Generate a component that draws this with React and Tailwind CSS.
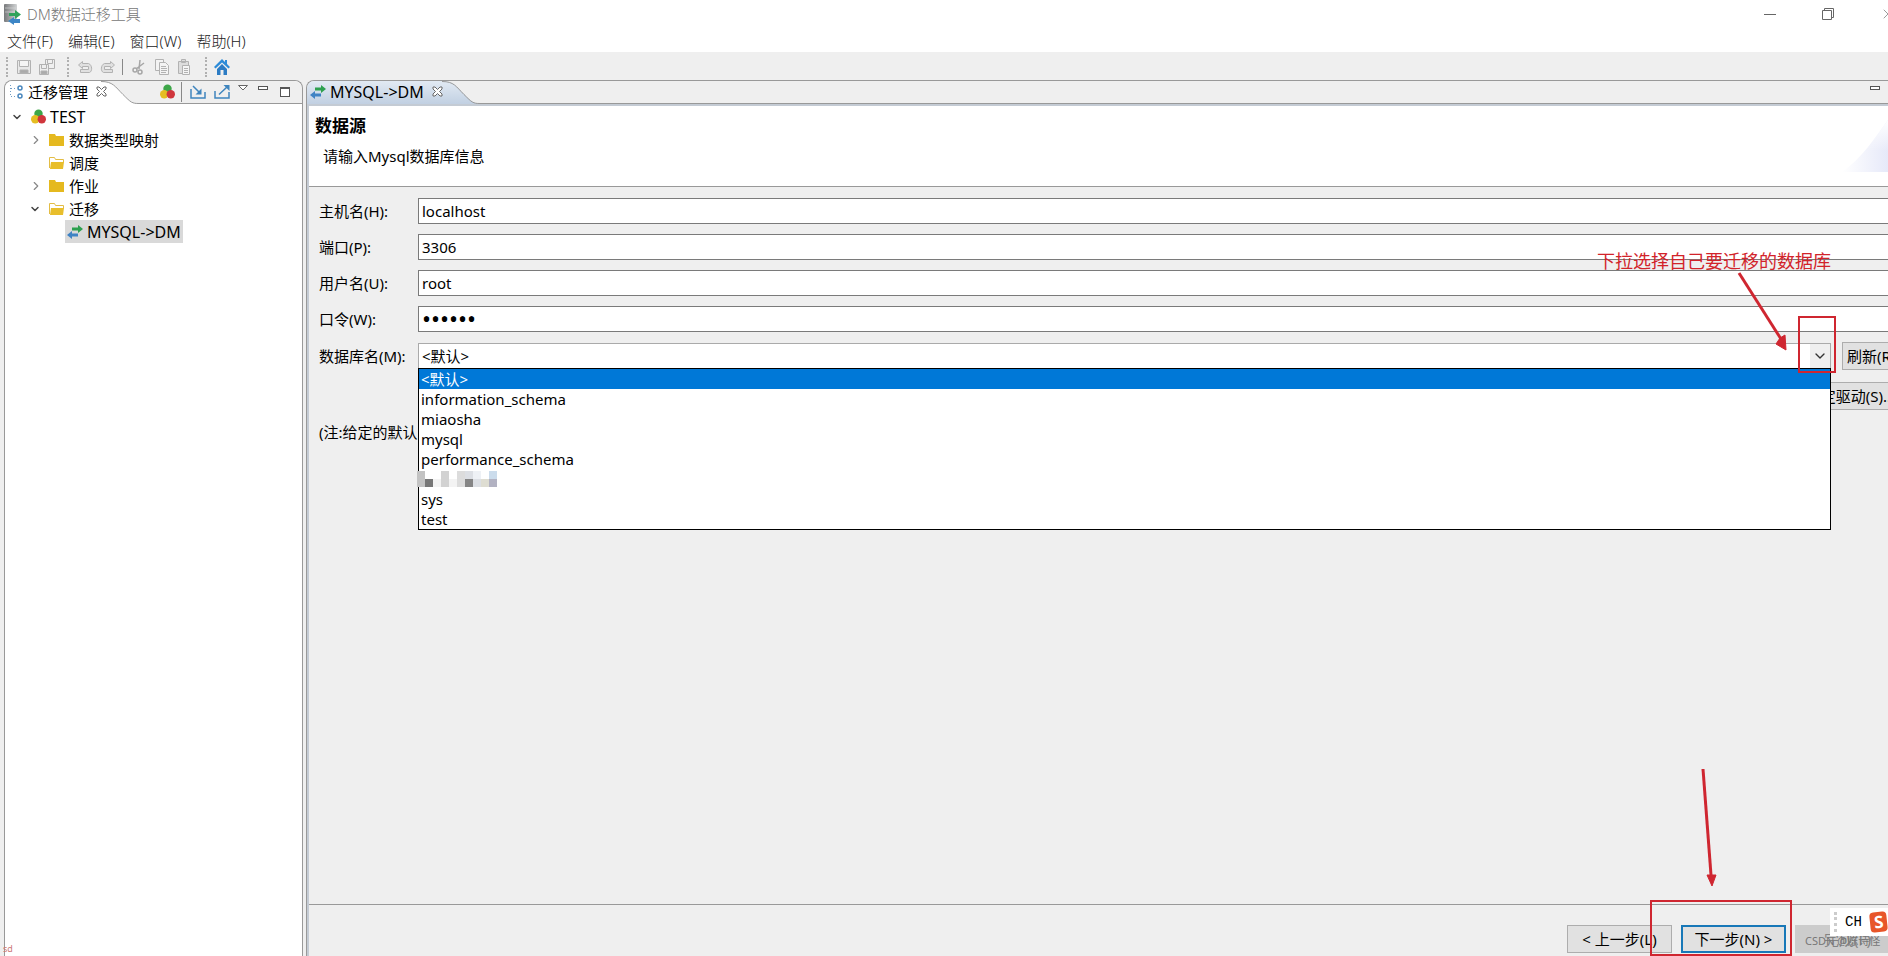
import { useState } from 'react';
import { X, ChevronDown, ChevronRight } from 'lucide-react';

const databases = [
  '<默认>',
  'information_schema',
  'miaosha',
  'mysql',
  'performance_schema',
  null,
  'sys',
  'test',
];

const fields = [
  { id: 'host', label: '主机名(H):', type: 'text', value: 'localhost' },
  { id: 'port', label: '端口(P):', type: 'text', value: '3306' },
  { id: 'user', label: '用户名(U):', type: 'text', value: 'root' },
];

const menus = ['文件(F)', '编辑(E)', '窗口(W)', '帮助(H)'];

const AppIcon = () => (
  <svg width="18" height="22" viewBox="0 0 18 22" className="shrink-0">
    <defs>
      <linearGradient id="server">
        <stop offset="0" stopColor="#77797b" />
        <stop offset="1" stopColor="#d2d4d5" />
      </linearGradient>
    </defs>
    <rect x="0" y="1" width="13" height="18" rx="1" fill="url(#server)" />
    <path d="M1 5h11M1 9h11" stroke="#dcdddd" strokeOpacity=".6" />
    <path d="M5 10h6V7l6 4.500-6 4.500v-3H5z" fill="#2fa35b" />
    <path d="M16 16h-6v-2l-6 4 6 4v-2h6z" fill="#3d86c6" />
  </svg>
);

const Arrows = () => (
  <svg width="16" height="14" viewBox="0 0 16 14" className="shrink-0">
    <path d="M5 2.500h6V0l5 4-5 4V5.500H5z" fill="#2da04f" />
    <path d="M11 8.500H5V6L0 10l5 4v-2.500h6z" fill="#3f83c4" />
  </svg>
);

const Balls = () => (
  <svg width="15" height="15" viewBox="0 0 16 16" className="shrink-0">
    <circle cx="8" cy="5" r="4.500" fill="#3da648" />
    <circle cx="4.500" cy="11" r="4.500" fill="#e5bd22" />
    <circle cx="11.500" cy="11" r="4.500" fill="#d0363c" />
  </svg>
);

const Folder = ({ open }) => (
  <svg width="16" height="14" viewBox="0 0 16 14" className="shrink-0">
    {open ? (
      <>
        <path d="M.5 12V1.500h5l1 2h8v3" fill="#fff" stroke="#e3bd45" />
        <path d="M2 6h13l-1 7H1z" fill="#e8be2c" />
      </>
    ) : (
      <path d="M0 1h6l1 2h8v10H0z" fill="#e5b91f" />
    )}
  </svg>
);

// bow-tie shaped close mark of an Eclipse tab
const TabClose = () => (
  <svg width="11" height="11" viewBox="0 0 11 11">
    <path
      d="M1 1h2l2.500 2.500L8 1h2v2L7.500 5.500 10 8v2H8L5.500 7.500 3 10H1V8l2.500-2.500L1 3z"
      fill="#fff"
      stroke="#666"
    />
  </svg>
);

const Grip = () => <span className="h-5 border-l-2 border-dotted border-[#b0b0b0]" />;

function Toolbar() {
  return (
    <div className="flex h-7 items-center bg-[#efefef] pl-1.5 pt-0.5">
      <Grip />
      <button aria-label="保存" className="ml-2">
        <svg width="16" height="16" viewBox="0 0 16 16" fill="none" stroke="#b2b2b2">
          <path d="M1.500 1.500h13v13h-13z" fill="#e8e8e8" />
          <path d="M3.500 1.500h9v6h-9z" fill="#f5f5f5" />
          <path d="M4 11h8v3H4z" fill="#aaa" />
        </svg>
      </button>
      <button aria-label="全部保存" className="ml-[7px]">
        <svg width="16" height="16" viewBox="0 0 16 16" fill="none" stroke="#b2b2b2">
          <path d="M6.500.5h9v9h-9zM8.500.5h5v4h-5z" fill="#f0f0f0" />
          <path d="M.5 5.500h9v10h-9z" fill="#eee" />
          <path d="M2.500 5.500h5v4h-5z" />
          <path d="M2 12h6v3H2z" fill="#aaa" />
        </svg>
      </button>
      <span className="ml-3 flex">
        <Grip />
      </span>
      <button aria-label="撤销" className="ml-2">
        <svg width="16" height="16" viewBox="0 0 16 16" fill="none" stroke="#b2b2b2">
          <path d="M5.500 2.500 1.500 6l4 3.500v-2h6v3h-8v3h9c3-1 3-7.500-1-9h-6z" fill="#e0e0e0" />
        </svg>
      </button>
      <button aria-label="重做" className="ml-[7px]">
        <svg width="16" height="16" viewBox="0 0 16 16" fill="none" stroke="#b2b2b2">
          <path d="m10.500 2.500 4 3.500-4 3.500v-2h-6v3h8v3h-9c-3-1-3-7.500 1-9h6z" fill="#e0e0e0" />
        </svg>
      </button>
      <span className="ml-1.5 h-4 w-px bg-[#888]" />
      <button aria-label="剪切" className="ml-2">
        <svg width="16" height="16" viewBox="0 0 16 16" fill="none" stroke="#a6a6a6" strokeWidth="1.500">
          <path d="m9 1-1 9M13 4 5 10" />
          <circle cx="4" cy="11" r="2" />
          <circle cx="9" cy="13" r="2" />
        </svg>
      </button>
      <button aria-label="复制" className="ml-[7px]">
        <svg width="16" height="16" viewBox="0 0 16 16" fill="#f3f3f3" stroke="#b2b2b2">
          <path d="M1.500.5h8v11h-8z" />
          <path d="M5.500 3.500h6l3 3v9h-9z" />
          <path d="M7 7.500h5M7 9.500h6M7 11.500h6M7 13.500h5" />
        </svg>
      </button>
      <button aria-label="粘贴" className="ml-[7px]">
        <svg width="16" height="16" viewBox="0 0 16 16" fill="#ddd" stroke="#b2b2b2">
          <path d="M1.500 2.500h10v12h-10zM4.500.5h4v3h-4z" />
          <path d="M5.500 6.500h7v9h-7z" fill="#f5f5f5" />
          <path d="M7 9.500h4M7 11.500h4M7 13.500h4" />
        </svg>
      </button>
      <span className="ml-3 flex">
        <Grip />
      </span>
      <button aria-label="主页" className="ml-[7px]">
        <svg width="16" height="16" viewBox="0 0 16 16">
          <path d="M8 0 0 8l1.500 1.500L8 3.500l6.500 6L16 8l-3-3V1h-2v2z" fill="#2c8bd8" />
          <path d="m8 5-5 5v6h3.500v-5h3v5H13v-6z" fill="#2c7cc4" />
        </svg>
      </button>
    </div>
  );
}

function TreeRow({ indent, state, icon, children, selected }) {
  return (
    <li className={`flex h-[23px] items-center ${indent}`}>
      <span className="flex w-5 shrink-0 items-center">
        {state === 'open' && <ChevronDown size={12} strokeWidth={3} className="text-[#444]" />}
        {state === 'closed' && <ChevronRight size={14} strokeWidth={2} className="text-[#888]" />}
      </span>
      <span className={`flex h-[23px] items-center gap-1 pr-0.5 ${selected ? 'bg-[#d9d9d9]' : ''}`}>
        {icon}
        {children}
      </span>
    </li>
  );
}

function Sidebar() {
  return (
    <aside className="ml-1 flex w-[299px] shrink-0 flex-col rounded-t-lg border border-b-0 border-[#999] bg-white">
      <div className="relative flex h-[23px] items-center overflow-hidden rounded-t-lg bg-[#efefef] pb-0.5 shadow-[inset_0_-1px_0_#999]">
        <svg width="134" height="23" viewBox="0 0 134 23" className="absolute left-0 top-0">
          <path d="M0 0h96c12 0 14 5 22 13s9 9 16 9.500V23H0z" fill="#fff" />
          <path d="M96 .5c12 0 14 5 22 13s9 9 16 9" fill="none" stroke="#999" />
        </svg>
        <h2 className="relative flex items-center pl-[3px]">
          <svg width="16" height="16" viewBox="0 0 16 16" fill="none">
            <path d="M2.500 1v12M3 4.500h6M3 12.500h6" stroke="#6f9cc4" strokeDasharray="1 2" />
            <circle cx="12" cy="4" r="2" stroke="#4a87bd" strokeWidth="1.500" />
            <circle cx="12" cy="12" r="2" stroke="#4a87bd" strokeWidth="1.500" />
          </svg>
          <span className="ml-1">迁移管理</span>
        </h2>
        <button aria-label="关闭视图" className="relative ml-2">
          <TabClose />
        </button>
        <div className="ml-auto flex items-center pr-3">
          <button aria-label="分组">
            <Balls />
          </button>
          <span className="ml-1.5 h-5 w-px bg-[#888]" />
          <button aria-label="导入" className="ml-2">
            <svg width="16" height="14" viewBox="0 0 16 14" fill="none" stroke="#3f85be" strokeWidth="1.500">
              <path d="M1 4v9h14V7M3 1l7 7" />
              <path d="M11.500 3.500V9.500H5.500z" fill="#3f85be" stroke="none" />
            </svg>
          </button>
          <button aria-label="导出" className="ml-2">
            <svg width="16" height="14" viewBox="0 0 16 14" fill="none" stroke="#3f85be" strokeWidth="1.500">
              <path d="M1 6v7h14V7M5 9.500 13 2" />
              <path d="M9.500 0H15.500V6z" fill="#3f85be" stroke="none" />
            </svg>
          </button>
          <button aria-label="视图菜单" className="mb-2 ml-2">
            <svg width="10" height="6" viewBox="0 0 10 6">
              <path d="M.5.5h9L5 5z" fill="#fff" stroke="#666" />
            </svg>
          </button>
          <button aria-label="最小化视图" className="mb-2 ml-2.5 h-1 w-2.5 border border-[#555] bg-white" />
          <button aria-label="最大化视图" className="ml-3 h-2.5 w-2.5 border border-t-2 border-[#555] bg-white" />
        </div>
      </div>
      <ul className="flex-1 pt-px">
        <TreeRow indent="pl-1.5" state="open" icon={<Balls />}>
          <span className="text-base leading-5">TEST</span>
        </TreeRow>
        <TreeRow indent="pl-6" state="closed" icon={<Folder />}>数据类型映射</TreeRow>
        <TreeRow indent="pl-6" icon={<Folder open />}>调度</TreeRow>
        <TreeRow indent="pl-6" state="closed" icon={<Folder />}>作业</TreeRow>
        <TreeRow indent="pl-6" state="open" icon={<Folder open />}>迁移</TreeRow>
        <TreeRow indent="pl-10" icon={<span className="pl-0.5"><Arrows /></span>} selected>
          <span className="text-base leading-5">MYSQL-&gt;DM</span>
        </TreeRow>
      </ul>
      <span className="-ml-0.5 pb-px text-[9px] leading-3 text-[#c77]">sd</span>
    </aside>
  );
}

function DatabaseList({ selected, onSelect }) {
  return (
    <ul role="listbox" aria-label="数据库" className="absolute inset-x-0 top-[25px] z-10 border border-black bg-white">
      {databases.map((name, i) => (
        <li
          key={i}
          role="option"
          aria-selected={name === selected}
          onClick={() => name && onSelect(name)}
          className={`h-5 px-0.5 leading-5 ${name === selected ? 'bg-[#0078d7] text-white' : ''}`}
        >
          {name || (
            <svg width="80" height="18" viewBox="0 0 80 18" className="-ml-1">
              <g transform="translate(0 2)">
                <path d="M0 0h8v16H0z" fill="#c3c3c3" />
                <path d="M8 8h8v8H8z" fill="#777" />
                <path d="M16 8h8v8h-8zM32 8h8v8h-8z" fill="#f3f3f3" />
                <path d="M24 0h8v16h-8z" fill="#d2d2d2" />
                <path d="M40 0h8v16h-8z" fill="#dcdcdc" />
                <path d="M48 0h8v8h-8zM56 8h8v8h-8z" fill="#dcdfe4" />
                <path d="M48 8h8v8h-8z" fill="#858585" />
                <path d="M56 0h8v8h-8z" fill="#eef1f5" />
                <path d="M64 8h8v8h-8z" fill="#deddd2" />
                <path d="M72 0h8v8h-8z" fill="#cbdcec" />
                <path d="M72 8h8v8h-8z" fill="#b2b2c2" />
              </g>
            </svg>
          )}
        </li>
      ))}
    </ul>
  );
}

function SourceForm() {
  const [db, setDb] = useState('<默认>');
  const inputClass = 'h-[26px] min-w-0 flex-1 border border-r-0 border-[#7a7a7a] bg-white px-[3px] outline-none';

  return (
    <form className="flex-1 pl-2.5 pt-[11px]">
      <div className="flex flex-col gap-2.5">
        {fields.map((f) => (
          <div key={f.id} className="flex items-center">
            <label htmlFor={f.id} className="w-[99px] shrink-0">{f.label}</label>
            <input id={f.id} type={f.type} defaultValue={f.value} className={inputClass} />
          </div>
        ))}
        <div className="flex items-center">
          <label htmlFor="password" className="w-[99px] shrink-0">口令(W):</label>
          <input id="password" type="password" defaultValue="123456" className={`${inputClass} text-2xl`} />
        </div>
      </div>

      <div className="mt-2.5 flex items-center">
        <label htmlFor="database" className="w-[99px] shrink-0 whitespace-nowrap">数据库名(M):</label>
        <div className="relative min-w-0 flex-1">
          <select
            id="database"
            value={db}
            onChange={(e) => setDb(e.target.value)}
            className="block h-[26px] w-full appearance-none border border-[#aaa] bg-white px-[3px] leading-6 outline-none"
          >
            {databases.filter(Boolean).map((name) => (
              <option key={name}>{name}</option>
            ))}
          </select>
          <span className="pointer-events-none absolute right-px top-px flex h-6 w-5 items-center justify-center bg-[#efefef]">
            <ChevronDown size={16} className="text-[#333]" />
          </span>
          <DatabaseList selected={db} onSelect={setDb} />

          <p className="pointer-events-none absolute bottom-24 right-0 z-20 whitespace-nowrap text-[18px] leading-6 text-[#d2232a]">
            下拉选择自己要迁移的数据库
          </p>
          <svg width="110" height="110" viewBox="0 0 110 110" className="pointer-events-none absolute -right-2.5 -top-20 z-20">
            <path d="m8 10 42 66" stroke="#cf2630" strokeWidth="3" />
            <path d="m55 87-10-6 4-6 5-3z" fill="#cf2630" stroke="#cf2630" />
            <path d="M68 54h36v55H68z" fill="none" stroke="#cf2630" strokeWidth="2" />
          </svg>
        </div>
        <button type="button" className="-mr-3 ml-[11px] h-7 w-[58px] shrink-0 whitespace-nowrap border border-[#adadad] bg-[#e1e1e1] pl-1 text-left">
          刷新(R)
        </button>
      </div>
      <div className="mt-3 flex justify-end">
        <button type="button" className="-mr-5 h-7 whitespace-nowrap border border-[#adadad] bg-[#e1e1e1] px-3">
          指定驱动(S)...
        </button>
      </div>
      <p className="mt-3 leading-5">(注:给定的默认</p>
    </form>
  );
}

function Footer() {
  const btn = 'h-7 w-[105px] shrink-0 whitespace-nowrap border';
  return (
    <div className="flex justify-end gap-[9px] border-t border-[#999] pb-[3px] pt-5">
      <button className={`${btn} border-[#adadad] bg-[#e1e1e1]`}>&lt; 上一步(L)</button>
      <div className="relative">
        <button className={`${btn} border-2 border-[#1878b8] bg-[#e1e1e1]`}>下一步(N) &gt;</button>
        <svg width="144" height="190" viewBox="0 0 144 190" className="pointer-events-none absolute -left-8 bottom-[-3px] z-20">
          <path d="m54 3 8 106" stroke="#cf2630" strokeWidth="3" />
          <path d="m63 120-5-11h9z" fill="#cf2630" stroke="#cf2630" />
          <path d="M2 135h140v54H2z" fill="none" stroke="#cf2630" strokeWidth="2" />
        </svg>
      </div>
      <div className="relative">
        <button className={`${btn} -mr-3 border-[#ccc] bg-[#ccc] text-[#838383]`}>完成(F)</button>
        <span className="pointer-events-none absolute left-2.5 top-2 whitespace-nowrap text-[11px] leading-4 text-[#777]">
          CSDN @陈诗怪
        </span>
        <div className="absolute -top-[17px] right-0 z-20 flex h-7 w-[58px] items-center gap-2 overflow-hidden bg-white pl-1">
          <span className="h-5 shrink-0 border-l-[3px] border-dotted border-[#ccc]" />
          <span className="font-['Liberation_Mono',monospace] text-[14px]">CH</span>
          <span className="-rotate-6 rounded-sm bg-[#e8562a] px-1 text-[17px] font-bold leading-5 text-white">S</span>
        </div>
      </div>
    </div>
  );
}

function Editor() {
  return (
    <main className="ml-[3px] flex min-w-0 flex-1 flex-col rounded-tl-lg border-l border-t border-[#999] bg-[#efefef]">
      <div className="relative flex h-[23px] items-center rounded-tl-lg pb-0.5 shadow-[inset_0_-1px_0_#999]">
        <svg width="180" height="23" viewBox="0 0 180 23" className="absolute left-0 top-0">
          <defs>
            <linearGradient id="tab" x1="0" y1="0" x2="0" y2="1">
              <stop offset="0" stopColor="#e2eaf3" />
              <stop offset="1" stopColor="#c1d0e2" />
            </linearGradient>
          </defs>
          <path d="M0 8C0 3 3 0 8 0h127c12 0 14 5 22 13s9 9 16 9.500V23H0z" fill="url(#tab)" />
          <path d="M135 .5c12 0 14 5 22 13s9 9 16 9" fill="none" stroke="#999" />
        </svg>
        <h2 className="relative flex items-center gap-1 pl-[3px] text-base leading-5">
          <Arrows />
          MYSQL-&gt;DM
        </h2>
        <button aria-label="关闭" className="relative ml-2">
          <TabClose />
        </button>
        <button aria-label="最小化" className="mb-2 ml-auto mr-2 h-1 w-2.5 border border-[#555] bg-white" />
      </div>
      <div className="flex flex-1 flex-col border-l-2 border-t-2 border-[#c4cbd4]">
        <header className="relative h-[81px] border-b border-[#999] bg-white pl-1.5 pt-2">
          <h1 className="text-[17px] font-bold leading-6">数据源</h1>
          <p className="mt-2 pl-2 leading-5">请输入Mysql数据库信息</p>
          <svg width="46" height="60" viewBox="0 0 46 60" className="absolute bottom-3.5 right-0">
            <defs>
              <linearGradient id="glow">
                <stop offset="0" stopColor="#fff" />
                <stop offset="1" stopColor="#e6e9f9" />
              </linearGradient>
              <linearGradient id="fade" x1="0" y1="0" x2="0" y2="1">
                <stop offset="0" stopColor="#fff" />
                <stop offset=".6" stopColor="#fff" stopOpacity="0" />
              </linearGradient>
            </defs>
            <path d="M0 60C18 48 34 25 46 8v52z" fill="url(#glow)" />
            <path d="M0 60C18 48 34 25 46 8v52z" fill="url(#fade)" />
          </svg>
        </header>
        <SourceForm />
        <Footer />
      </div>
    </main>
  );
}

export default function App() {
  return (
    <div className="flex min-h-screen flex-col overflow-hidden bg-white font-['Noto_Sans','Noto_Sans_CJK_SC',sans-serif] text-[15px] leading-5 text-black">
      <div className="flex h-7 items-center gap-[5px] pl-1 font-light text-[#777]">
        <AppIcon />
        <span>DM数据迁移工具</span>
        <div className="-mr-2 ml-auto flex items-center gap-[46px] text-[#666]">
          <button aria-label="最小化窗口" className="h-px w-3 bg-[#666]" />
          <button aria-label="还原窗口">
            <svg width="12" height="12" viewBox="0 0 12 12" fill="none" stroke="currentColor">
              <path d="M.5 2.500h9v9h-9zM2.500 2.500v-2h9v9h-2" />
            </svg>
          </button>
          <button aria-label="关闭窗口">
            <X size={16} strokeWidth={1} />
          </button>
        </div>
      </div>
      <nav className="flex h-6 items-center gap-[15px] pl-[7px] pt-px font-light text-[#222]">
        {menus.map((m) => (
          <button key={m}>{m}</button>
        ))}
      </nav>
      <Toolbar />
      <div className="flex flex-1 bg-[#efefef]">
        <Sidebar />
        <Editor />
      </div>
    </div>
  );
}
